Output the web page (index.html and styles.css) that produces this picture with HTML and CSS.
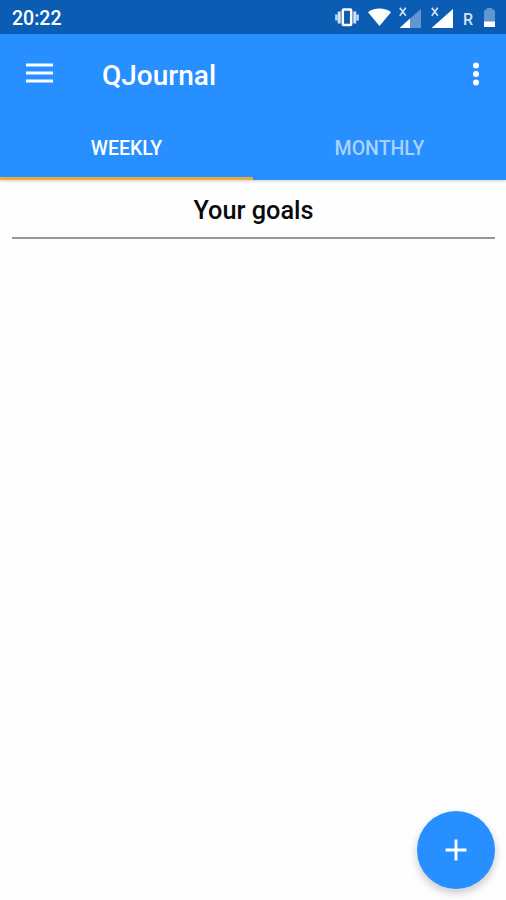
FILE: index.html
```html
<!DOCTYPE html>
<html lang="en">
<head>
    <meta charset="UTF-8">
    <meta name="viewport" content="width=device-width, initial-scale=1.0">
    <title>QJournal</title>
    <link rel="stylesheet" href="styles.css">
</head>
<body>
    <div class="status-bar">
        <span class="clock">20:22</span>
        <div class="status-icons">
            <!-- vibrate -->
            <svg width="24" height="20" viewBox="0 0 24 20">
                <rect x="7.800" y="1.500" width="8.400" height="15.500" rx="1" fill="none" stroke="#fff" stroke-width="2.500"/>
                <path d="M4.200 3.500v12M19.800 3.500v12" stroke="#d3e2f4" stroke-width="3"/>
                <path d="M1.400 6.500v6M22.600 6.500v6" stroke="#c3d7ef" stroke-width="2.500"/>
            </svg>
            <!-- wifi -->
            <svg width="23" height="20" viewBox="0 0 23 20">
                <path d="M0 4.200C3 1.800 7 .500 11.500.500S20 1.800 23 4.200L11.500 18z" fill="#fff"/>
            </svg>
            <!-- sim 1 -->
            <svg class="sim" width="23" height="22" viewBox="0 0 23 22">
                <path d="M22 2v19H11v-9.500z" fill="#6096d1"/>
                <path d="M11 11.500V21H.5z" fill="#fff"/>
                <path d="M.800.800l6 8M6.800.800l-6 8" stroke="#d3e2f4" stroke-width="1.700"/>
            </svg>
            <!-- sim 2 -->
            <svg class="sim" width="23" height="22" viewBox="0 0 23 22">
                <path d="M22 2v19H.5z" fill="#fff"/>
                <path d="M.800.800l6 8M6.800.800l-6 8" stroke="#d3e2f4" stroke-width="1.700"/>
            </svg>
            <span class="roaming">R</span>
            <!-- battery -->
            <svg class="battery" width="11" height="20" viewBox="0 0 11 20">
                <path d="M3 1.500V0h5v1.500h1.500L11 3v12H0V3l1.500-1.500z" fill="#6096d1"/>
                <path d="M0 13.500h11v5.500H0z" fill="#fff"/>
            </svg>
        </div>
    </div>

    <header class="app-header">
        <div class="toolbar">
            <button class="icon-btn menu" aria-label="Menu">
                <svg width="27" height="20" viewBox="0 0 27 20">
                    <path d="M0 2h27M0 10h27M0 18h27" stroke="#fff" stroke-width="3"/>
                </svg>
            </button>
            <h1 class="title">QJournal</h1>
            <button class="icon-btn" aria-label="More options">
                <svg width="8" height="24" viewBox="0 0 8 24">
                    <circle cx="4" cy="3.500" r="3" fill="#fff"/>
                    <circle cx="4" cy="12" r="3" fill="#fff"/>
                    <circle cx="4" cy="20.500" r="3" fill="#fff"/>
                </svg>
            </button>
        </div>
        <nav class="tabs">
            <a class="tab active"><span>WEEKLY</span></a>
            <a class="tab"><span>MONTHLY</span></a>
        </nav>
    </header>

    <main class="content">
        <h2 class="goals-title">Your goals</h2>
    </main>

    <button class="fab" aria-label="Add goal">
        <svg width="22" height="22" viewBox="0 0 22 22">
            <path d="M11 .500v21M.500 11h21" stroke="#fff" stroke-width="2.800"/>
        </svg>
    </button>
</body>
</html>
```

FILE: styles.css
```css
* {
    box-sizing: border-box;
}
body {
    margin: 0;
    height: 900px;
    overflow: hidden;
    background-color: #fefefe;
    font-family: Roboto, sans-serif;
}
button {
    border: none;
    padding: 0;
    background: none;
}
svg {
    display: block;
}
.status-bar {
    display: flex;
    align-items: center;
    justify-content: space-between;
    height: 34px;
    padding: 2px 11px 0 12px;
    background-color: #0b5cb3;
    color: #fff;
}
.clock {
    padding-top: 2px;
    font-size: 19.5px;
    font-weight: 500;
    line-height: 30px;
}
.status-icons {
    display: flex;
    align-items: center;
    gap: 9px;
}
.sim {
    margin-top: -1px;
}
.sim:nth-child(3) {
    margin-left: -1px;
}
.roaming {
    width: 10px;
    margin-top: 3px;
    font-size: 16px;
    font-weight: 500;
    line-height: 18px;
    color: #d3e2f4;
}
.battery {
    margin-left: 2px;
}
.app-header {
    height: 146px;
    background-color: #278fff;
    box-shadow: 0 1px 3px rgba(0, 0, 0, 0.2);
    color: #fff;
}
.toolbar {
    display: flex;
    align-items: center;
    height: 79px;
    padding: 0 26px;
}
.menu {
    margin-top: -1px;
}
.title {
    flex: 1;
    margin: 5px 0 0 49px;
    font-size: 28px;
    font-weight: 500;
    line-height: 32px;
}
.tabs {
    display: flex;
    height: 67px;
}
.tab {
    flex: 1;
    padding-top: 24px;
    border-bottom: 3px solid transparent;
    text-align: center;
    font-size: 19.5px;
    font-weight: 500;
    line-height: 24px;
    color: #a9d2ff;
}
.tab.active {
    border-color: #e5ad42;
    color: #fff;
}
.content {
    padding: 0 11px 0 12px;
}
.goals-title {
    margin: 0;
    height: 59px;
    padding-top: 16px;
    border-bottom: 2px solid #979797;
    text-align: center;
    font-size: 25.3px;
    font-weight: 500;
    line-height: 30px;
    color: #0a0a0a;
}
.fab {
    position: fixed;
    right: 11px;
    bottom: 11px;
    display: flex;
    align-items: center;
    justify-content: center;
    width: 78px;
    height: 78px;
    border-radius: 50%;
    background-color: #278fff;
    box-shadow: 0 4px 8px rgba(0, 0, 0, 0.22);
}
```
